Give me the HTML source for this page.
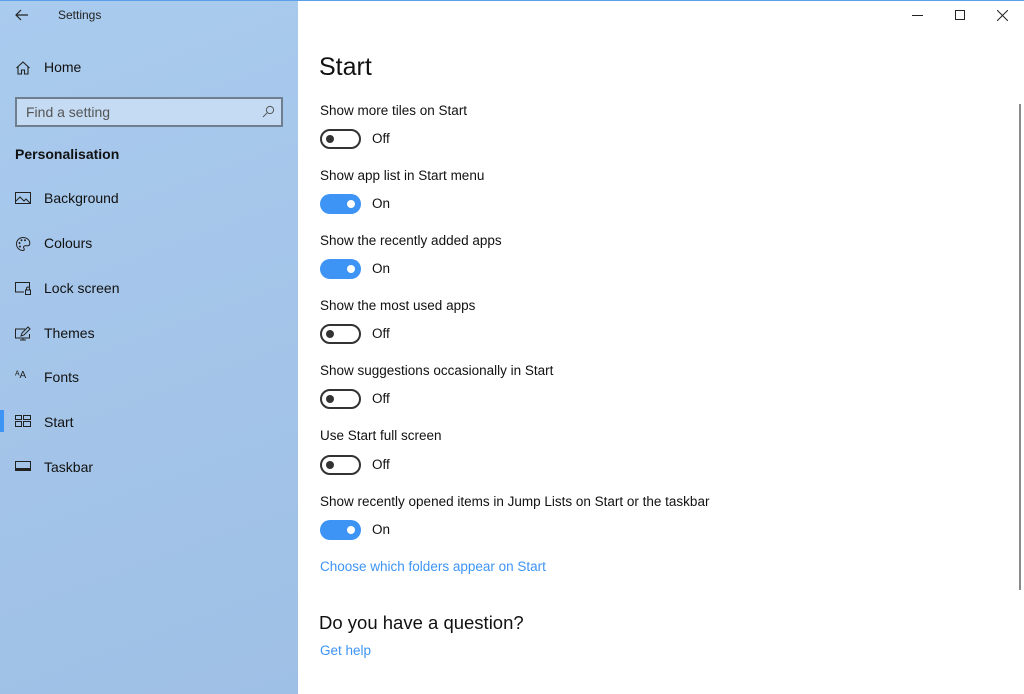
<!DOCTYPE html>
<html><head><style>
*{margin:0;padding:0;box-sizing:border-box}
body{width:1024px;height:694px;overflow:hidden;font-family:"Liberation Sans",sans-serif;background:#fff;position:relative;color:#000}
#side{position:absolute;left:0;top:0;width:298px;height:694px;background:linear-gradient(160deg,#a9cbee,#a3c4e8 60%,#9fc0e6)}
#topline{position:absolute;left:0;top:0;width:1024px;height:1px;background:#5aa0e8}
.t{position:absolute;white-space:nowrap}
.nav{position:absolute;left:15px;font-size:14px;color:#111}
.nav svg{position:absolute;left:0;top:0}
.nav span{position:absolute;left:29px;top:-1px;white-space:nowrap}
.lab{position:absolute;left:320px;font-size:13.5px;color:#111;white-space:nowrap}
.tg{position:absolute;left:320px;width:41px;height:20px;border-radius:10px}
.tg.off{border:2px solid #333}
.tg.off::after{content:"";position:absolute;left:4px;top:4px;width:8px;height:8px;border-radius:50%;background:#333}
.tg.on{background:#3d94f5}
.tg.on::after{content:"";position:absolute;right:6px;top:6px;width:8px;height:8px;border-radius:50%;background:#fff}
.st{position:absolute;left:372px;font-size:13.5px;color:#111}
</style></head><body>
<div id="side"></div>
<div id="topline"></div>
<svg class="t" style="left:15px;top:9px" width="14" height="12" viewBox="0 0 14 12"><path d="M6 1L1 6l5 5M1 6h12" stroke="#222" stroke-width="1.2" fill="none"/></svg>
<div class="t" style="left:58px;top:8px;font-size:12px;color:#222">Settings</div>
<div class="nav" style="top:60px"><svg width="16" height="16" viewBox="0 0 16 16"><path d="M1.5 8L8 2l6.5 6M3 7v7h3.5v-4h3v4H13V7" stroke="#222" stroke-width="1.1" fill="none"/></svg><span>Home</span></div>
<div class="t" style="left:15px;top:97px;width:268px;height:30px;border:2px solid #6f7f90;background:#c4dbf3"></div>
<div class="t" style="left:26px;top:104px;font-size:14px;color:#555">Find a setting</div>
<svg class="t" style="left:262px;top:105px" width="13" height="13" viewBox="0 0 13 13"><circle cx="8" cy="5" r="3.6" stroke="#555" fill="none"/><path d="M5.3 7.7L1 12" stroke="#555"/></svg>
<div class="t" style="left:15px;top:146px;font-size:14px;font-weight:bold;color:#111">Personalisation</div>
<div class="nav" style="top:191px"><svg width="16" height="14" viewBox="0 0 16 14"><rect x="0.5" y="1.5" width="15" height="11" stroke="#222" fill="none"/><path d="M1 10l4-4 4 4 2-2 4 4" stroke="#222" fill="none"/></svg><span>Background</span></div>
<div class="nav" style="top:236px"><svg width="16" height="16" viewBox="0 0 16 16"><path d="M8 1.5a6.5 6.5 0 1 0 0 13c1.5 0 1.5-1.5 .8-2.5-.7-1 0-2.3 1.5-2.3h2.5c1.5 0 2-1 2-2.5C14.8 4 11.8 1.5 8 1.5z" stroke="#222" fill="none"/><circle cx="4.5" cy="7" r="1" fill="#222"/><circle cx="6.5" cy="4.3" r="1" fill="#222"/><circle cx="10" cy="4.3" r="1" fill="#222"/><circle cx="5" cy="10.5" r="1" fill="#222"/></svg><span>Colours</span></div>
<div class="nav" style="top:281px"><svg width="16" height="14" viewBox="0 0 16 14"><path d="M9 11H.5V1.5h14v5" stroke="#222" fill="none"/><rect x="10.5" y="9" width="5" height="4.5" stroke="#222" fill="none"/><path d="M11.5 9V7.5a1.5 1.5 0 0 1 3 0V9" stroke="#222" fill="none"/></svg><span>Lock screen</span></div>
<div class="nav" style="top:326px"><svg width="16" height="15" viewBox="0 0 16 15"><path d="M10 3H.5v9h14V8M5 14h6M8 12v2" stroke="#222" fill="none"/><path d="M6 10l1-3 6-6 2 2-6 6z" stroke="#222" fill="none"/></svg><span>Themes</span></div>
<div class="t" style="left:15px;top:370px;font-size:10px;color:#222">ᴬA</div>
<div class="nav" style="top:370px"><span>Fonts</span></div>
<div class="t" style="left:0;top:410px;width:4px;height:22px;background:#3d94f5"></div>
<div class="nav" style="top:415px"><svg width="16" height="12" viewBox="0 0 16 12"><rect x=".5" y=".5" width="6" height="4" stroke="#222" fill="none"/><rect x="8.5" y=".5" width="7" height="4" stroke="#222" fill="none"/><rect x=".5" y="6.5" width="6" height="5" stroke="#222" fill="none"/><rect x="8.5" y="6.5" width="7" height="5" stroke="#222" fill="none"/></svg><span>Start</span></div>
<div class="nav" style="top:460px"><svg width="16" height="12" viewBox="0 0 16 12"><rect x=".5" y="1.5" width="15" height="9" stroke="#222" fill="none"/><rect x="1" y="8" width="14" height="2" fill="#222"/></svg><span>Taskbar</span></div>

<div class="t" style="left:912px;top:15px;width:11px;height:1px;background:#222"></div>
<div class="t" style="left:955px;top:10px;width:10px;height:10px;border:1px solid #222"></div>
<svg class="t" style="left:997px;top:10px" width="11" height="11" viewBox="0 0 11 11"><path d="M0 0l11 11M11 0L0 11" stroke="#222"/></svg>
<div class="t" style="left:1019px;top:104px;width:2px;height:486px;background:#8a8a8a"></div>

<div class="t" style="left:319px;top:53px;font-size:25px;color:#111">Start</div>

<div class="lab" style="top:103px">Show more tiles on Start</div><div class="tg off" style="top:129px"></div><div class="st" style="top:131px">Off</div>
<div class="lab" style="top:168px">Show app list in Start menu</div><div class="tg on" style="top:194px"></div><div class="st" style="top:196px">On</div>
<div class="lab" style="top:233px">Show the recently added apps</div><div class="tg on" style="top:259px"></div><div class="st" style="top:261px">On</div>
<div class="lab" style="top:298px">Show the most used apps</div><div class="tg off" style="top:324px"></div><div class="st" style="top:326px">Off</div>
<div class="lab" style="top:363px">Show suggestions occasionally in Start</div><div class="tg off" style="top:389px"></div><div class="st" style="top:391px">Off</div>
<div class="lab" style="top:428px">Use Start full screen</div><div class="tg off" style="top:455px"></div><div class="st" style="top:457px">Off</div>
<div class="lab" style="top:494px">Show recently opened items in Jump Lists on Start or the taskbar</div><div class="tg on" style="top:520px"></div><div class="st" style="top:522px">On</div>

<div class="lab" style="top:559px;color:#3d94f5">Choose which folders appear on Start</div>
<div class="t" style="left:319px;top:612px;font-size:18.5px;color:#111">Do you have a question?</div>
<div class="lab" style="top:643px;color:#3d94f5">Get help</div>
</body></html>
